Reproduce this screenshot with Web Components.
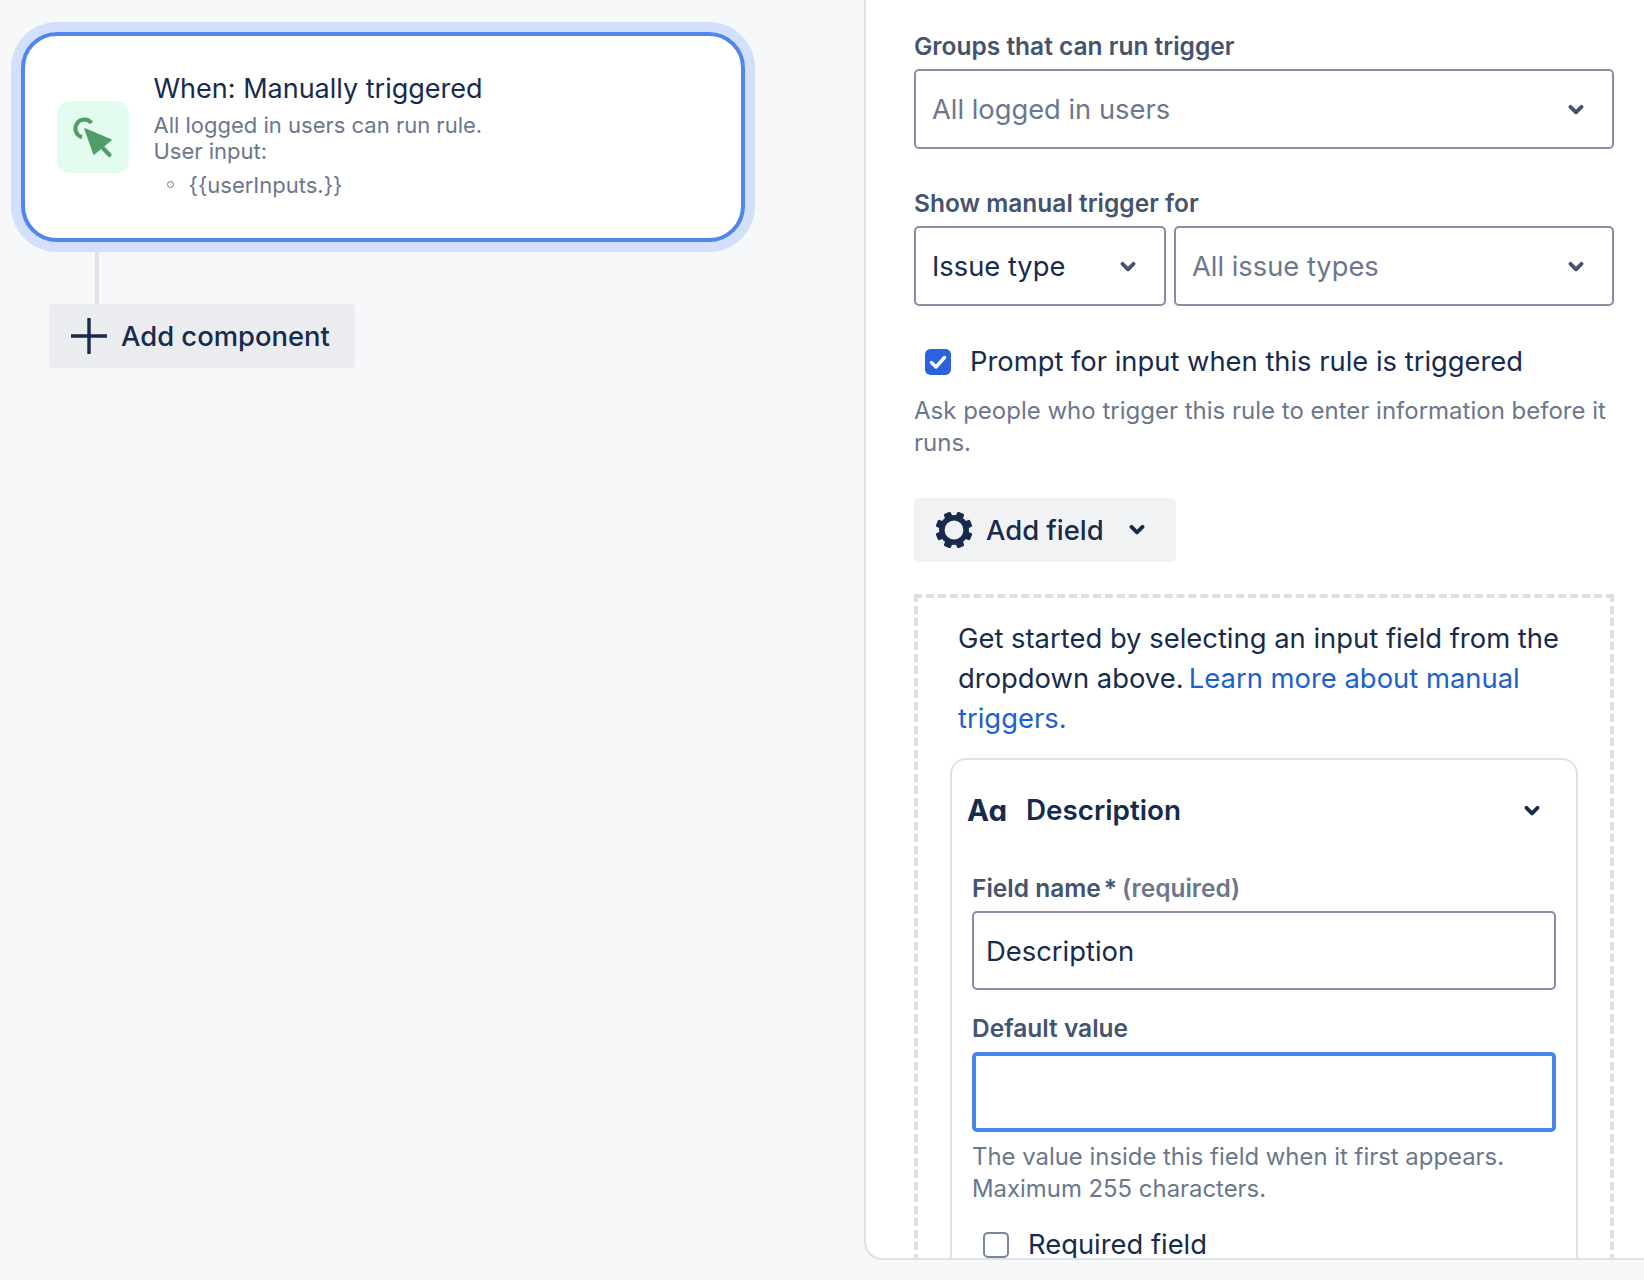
<!DOCTYPE html>
<html lang="en">
<head>
<meta charset="utf-8">
<title>Manual trigger</title>
<style>
html,body{margin:0;padding:0;background:#F7F8F9;}
body{width:1644px;height:1280px;overflow:hidden;font-family:Inter,"Liberation Sans",sans-serif;color:#172B4D;}
</style>
</head>
<body>
<rule-editor>
  <flow-canvas slot="canvas">
    <rule-card title="When: Manually triggered">
      <span>All logged in users can run rule.</span>
      <span>User input:</span>
      <span slot="items">{{userInputs.}}</span>
    </rule-card>
    <flow-connector></flow-connector>
    <add-button>Add component</add-button>
  </flow-canvas>
  <config-panel slot="panel">
    <field-label>Groups that can run trigger</field-label>
    <select-box placeholder>All logged in users</select-box>
    <field-label style="margin-top:39px">Show manual trigger for</field-label>
    <select-row>
      <select-box style="flex:0 0 252px">Issue type</select-box>
      <select-box placeholder style="flex:1">All issue types</select-box>
    </select-row>
    <check-row checked style="margin:43px 0 0 11px">Prompt for input when this rule is triggered</check-row>
    <help-text style="margin-top:20px">Ask people who trigger this rule to enter information before it runs.</help-text>
    <menu-button style="margin-top:39px">Add field</menu-button>
    <drop-zone><span>Get started by selecting an input field from the</span> <span>dropdown above.</span> <a href="#" style="margin-left:-2.5px">Learn more about manual</a> <a href="#">triggers.</a>
      <field-card slot="card" name="Description">
        <field-label required>Field name</field-label>
        <text-input>Description</text-input>
        <field-label style="margin-top:23px">Default value</field-label>
        <text-input focused></text-input>
        <help-text style="margin-top:9px;font-size:23.9px">The value inside this field when it first appears.<br>Maximum 255 characters.</help-text>
        <check-row style="margin:27px 0 0 11px">Required field</check-row>
      </field-card>
    </drop-zone>
  </config-panel>
</rule-editor>
<script>
const CHEV = '<svg class="chev" width="16" height="12" viewBox="0 0 16 12" fill="none" aria-hidden="true"><path d="M2.5 2.8 8 8.3l5.5-5.5" stroke="currentColor" stroke-width="3.8" stroke-linecap="round" stroke-linejoin="round"/></svg>';

function el(name, html) {
  customElements.define(name, class extends HTMLElement {
    constructor() {
      super();
      this.attachShadow({mode:'open'}).innerHTML = html;
    }
  });
}

customElements.define('rule-editor', class extends HTMLElement {
  constructor() {
    super();
    this.attachShadow({mode:'open'}).innerHTML = `<style>
      :host{display:flex;width:1644px;height:1260px;align-items:stretch}
      ::slotted([slot=canvas]){flex:0 0 864px}
      ::slotted([slot=panel]){flex:1;min-width:0}
    </style><slot name="canvas"></slot><slot name="panel"></slot>`;
  }
});

el('flow-canvas', `<style>
  :host{display:block;box-sizing:border-box;padding:32px 0 0 21px}
</style><slot></slot>`);

customElements.define('rule-card', class extends HTMLElement {
  constructor() {
    super();
    const t = this.getAttribute('title') || '';
    this.removeAttribute('title');
    this.attachShadow({mode:'open'}).innerHTML = `<style>
      :host{display:flex;box-sizing:border-box;width:724px;height:210px;align-items:center;gap:25px;
        padding:0 0 0 31.5px;background:#fff;border:4px solid #5285EE;border-radius:36px;
        box-shadow:0 0 0 10px #D2E0FC;position:relative;z-index:1}
      .icon{flex:none;width:72px;height:72px;border-radius:13px;background:#E4FCF0;display:block;margin-top:-1px}
      .txt{display:flex;flex-direction:column;margin-top:-5px}
      h3{margin:0 0 6px;font:400 27px/34px Inter,"Liberation Sans",sans-serif;color:#172B4D}
      .sub{display:flex;flex-direction:column;font:400 22px/26px Inter,"Liberation Sans",sans-serif;color:#6B778C}
      ul{margin:8px 0 0;padding:0 0 0 35px;list-style:none;font:400 22px/26px Inter,"Liberation Sans",sans-serif;color:#6B778C}
      li{position:relative}
      li::before{content:"";position:absolute;left:-22px;top:9px;width:5px;height:5px;border:1.5px solid #6B778C;border-radius:50%}
    </style>
    <svg class="icon" viewBox="0 0 72 72" fill="none" aria-hidden="true">
      <path d="M34.5 22A9 9 0 1 0 25 36.2" stroke="#4F9E6A" stroke-width="4"/>
      <path d="M28 28 54 39 37 53Z" fill="#4F9E6A" stroke="#4F9E6A" stroke-width="1.5" stroke-linejoin="round"/>
      <path d="M44 45l8.5 9" stroke="#4F9E6A" stroke-width="4.2" stroke-linecap="round"/>
    </svg>
    <div class="txt"><h3>${t}</h3><div class="sub"><slot></slot></div><ul><li><slot name="items"></slot></li></ul></div>`;
  }
});

el('flow-connector', `<style>
  :host{display:block;width:4px;height:52px;margin:10px 0 0 74px;background:#DFE1E6}
</style>`);

el('add-button', `<style>
  :host{display:flex;box-sizing:border-box;width:306px;height:64px;margin-left:28px;align-items:center;gap:14px;
    padding-left:22px;background:#EBECF0;border-radius:4px;font:500 27.4px/34px Inter,"Liberation Sans",sans-serif;color:#172B4D}
  svg{flex:none}
</style><svg width="36" height="36" viewBox="0 0 36 36" aria-hidden="true"><path d="M18 .5v35M.5 18h35" stroke="#172B4D" stroke-width="3.4" stroke-linecap="round"/></svg><slot></slot>`);

el('config-panel', `<style>
  :host{display:block;box-sizing:border-box;padding:31px 30px 0 48px;background:#fff;overflow:hidden;
    border-left:2px solid #DFE1E6;border-bottom:2px solid #DFE1E6;border-bottom-left-radius:18px}
</style><slot></slot>`);

customElements.define('field-label', class extends HTMLElement {
  constructor() {
    super();
    const req = this.hasAttribute('required');
    this.attachShadow({mode:'open'}).innerHTML = `<style>
      :host{display:block;height:30px;font:600 24.5px/30px Inter,"Liberation Sans",sans-serif;color:#44546F}
      .a{color:#44546F;margin-left:3px}
      .r{color:#6B778C;margin-left:5px}
    </style><slot></slot>${req ? '<span class="a">*</span><span class="r">(required)</span>' : ''}`;
  }
});

customElements.define('select-box', class extends HTMLElement {
  constructor() {
    super();
    this.attachShadow({mode:'open'}).innerHTML = `<style>
      :host{display:flex;box-sizing:border-box;height:80px;margin-top:8px;align-items:center;justify-content:space-between;
        padding:2px 28px 0 16px;background:#fff;border:2px solid #858FA1;border-radius:5px;
        font:400 27.3px/34px Inter,"Liberation Sans",sans-serif;color:#172B4D}
      :host([placeholder]){color:#6B778C}
      .chev{flex:none;color:#44546F}
    </style><slot></slot>${CHEV}`;
  }
});

el('select-row', `<style>
  :host{display:flex;gap:8px}
</style><slot></slot>`);

customElements.define('check-row', class extends HTMLElement {
  constructor() {
    super();
    const on = this.hasAttribute('checked');
    this.attachShadow({mode:'open'}).innerHTML = `<style>
      :host{display:flex;height:26px;align-items:center;gap:19px;font:400 27.35px/34px Inter,"Liberation Sans",sans-serif;color:#172B4D}
      .box{flex:none;box-sizing:border-box;width:26px;height:26px;border-radius:5px;display:block}
      .off{background:#fff;border:2px solid #7A869A}
    </style>${on
      ? '<svg class="box" viewBox="0 0 26 26" aria-hidden="true"><rect width="26" height="26" rx="5" fill="#2A63DC"/><path d="M6.5 13.5l4.5 4.5 8.5-9.5" fill="none" stroke="#fff" stroke-width="3.4" stroke-linecap="round" stroke-linejoin="round"/></svg>'
      : '<span class="box off"></span>'}<slot></slot>`;
  }
});

el('help-text', `<style>
  :host{display:block;font:400 24px/32px Inter,"Liberation Sans",sans-serif;color:#6B778C}
</style><slot></slot>`);

let gear = '';
for (let i = 0; i < 8; i++) gear += `<rect x="15.25" y="0.5" width="7.5" height="7" rx="1.5" transform="rotate(${i*45+22.5} 19 19)"/>`;
customElements.define('menu-button', class extends HTMLElement {
  constructor() {
    super();
    this.attachShadow({mode:'open'}).innerHTML = `<style>
      :host{display:flex;box-sizing:border-box;width:262px;height:64px;align-items:center;padding-left:21px;
        background:#F1F2F4;border-radius:5px;font:500 27.4px/34px Inter,"Liberation Sans",sans-serif;color:#172B4D}
      .gear{flex:none;margin-right:13px}
      .chev{flex:none;margin-left:25px;color:#172B4D}
    </style><svg class="gear" width="38" height="38" viewBox="0 0 38 38" fill="#172B4D" aria-hidden="true">${gear}<circle cx="19" cy="19" r="12.2" fill="none" stroke="#172B4D" stroke-width="5.6"/></svg><slot></slot>${CHEV}`;
  }
});

customElements.define('drop-zone', class extends HTMLElement {
  constructor() {
    super();
    this.attachShadow({mode:'open'}).innerHTML = `<style>
      :host{display:block;box-sizing:border-box;margin-top:32px;padding:20px 32px 0 32px;height:800px;
        border:4px dashed #DDDFE4;font:400 27.4px/40px Inter,"Liberation Sans",sans-serif;color:#172B4D}
      .t{display:block;padding-left:8px;margin-bottom:20px}
      ::slotted(a){color:#1D5FD1;text-decoration:none}
    </style><div class="t"><slot></slot></div><slot name="card"></slot>`;
  }
});

customElements.define('field-card', class extends HTMLElement {
  constructor() {
    super();
    const n = this.getAttribute('name') || '';
    this.attachShadow({mode:'open'}).innerHTML = `<style>
      :host{display:block;box-sizing:border-box;padding:0 20px;height:600px;background:#fff;border:2px solid #DFE1E6;border-radius:16px}
      header{display:flex;align-items:center;height:100px;margin:0 0 0 -5px;font:600 27.8px/34px Inter,"Liberation Sans",sans-serif;color:#172B4D}
      .aa{font-weight:700;font-size:29.5px;width:59px;letter-spacing:-.5px}
      .name{flex:1}
      .chev{flex:none;margin:2px 16px 0 0}
      .body{margin-top:13px}
    </style><header><span class="aa">Aɑ</span><span class="name">${n}</span>${CHEV}</header><div class="body"><slot></slot></div>`;
  }
});

customElements.define('text-input', class extends HTMLElement {
  constructor() {
    super();
    this.attachShadow({mode:'open'}).innerHTML = `<style>
      :host{display:flex;box-sizing:border-box;height:79px;margin-top:8px;align-items:center;padding:0 12px;background:#fff;
        border:2px solid #858FA1;border-radius:5px;font:400 27.4px/34px Inter,"Liberation Sans",sans-serif;color:#172B4D}
      :host([focused]){height:80px;margin-top:9px;border:4px solid #4C84EE}
    </style><slot></slot>`;
  }
});
</script>
</body>
</html>
